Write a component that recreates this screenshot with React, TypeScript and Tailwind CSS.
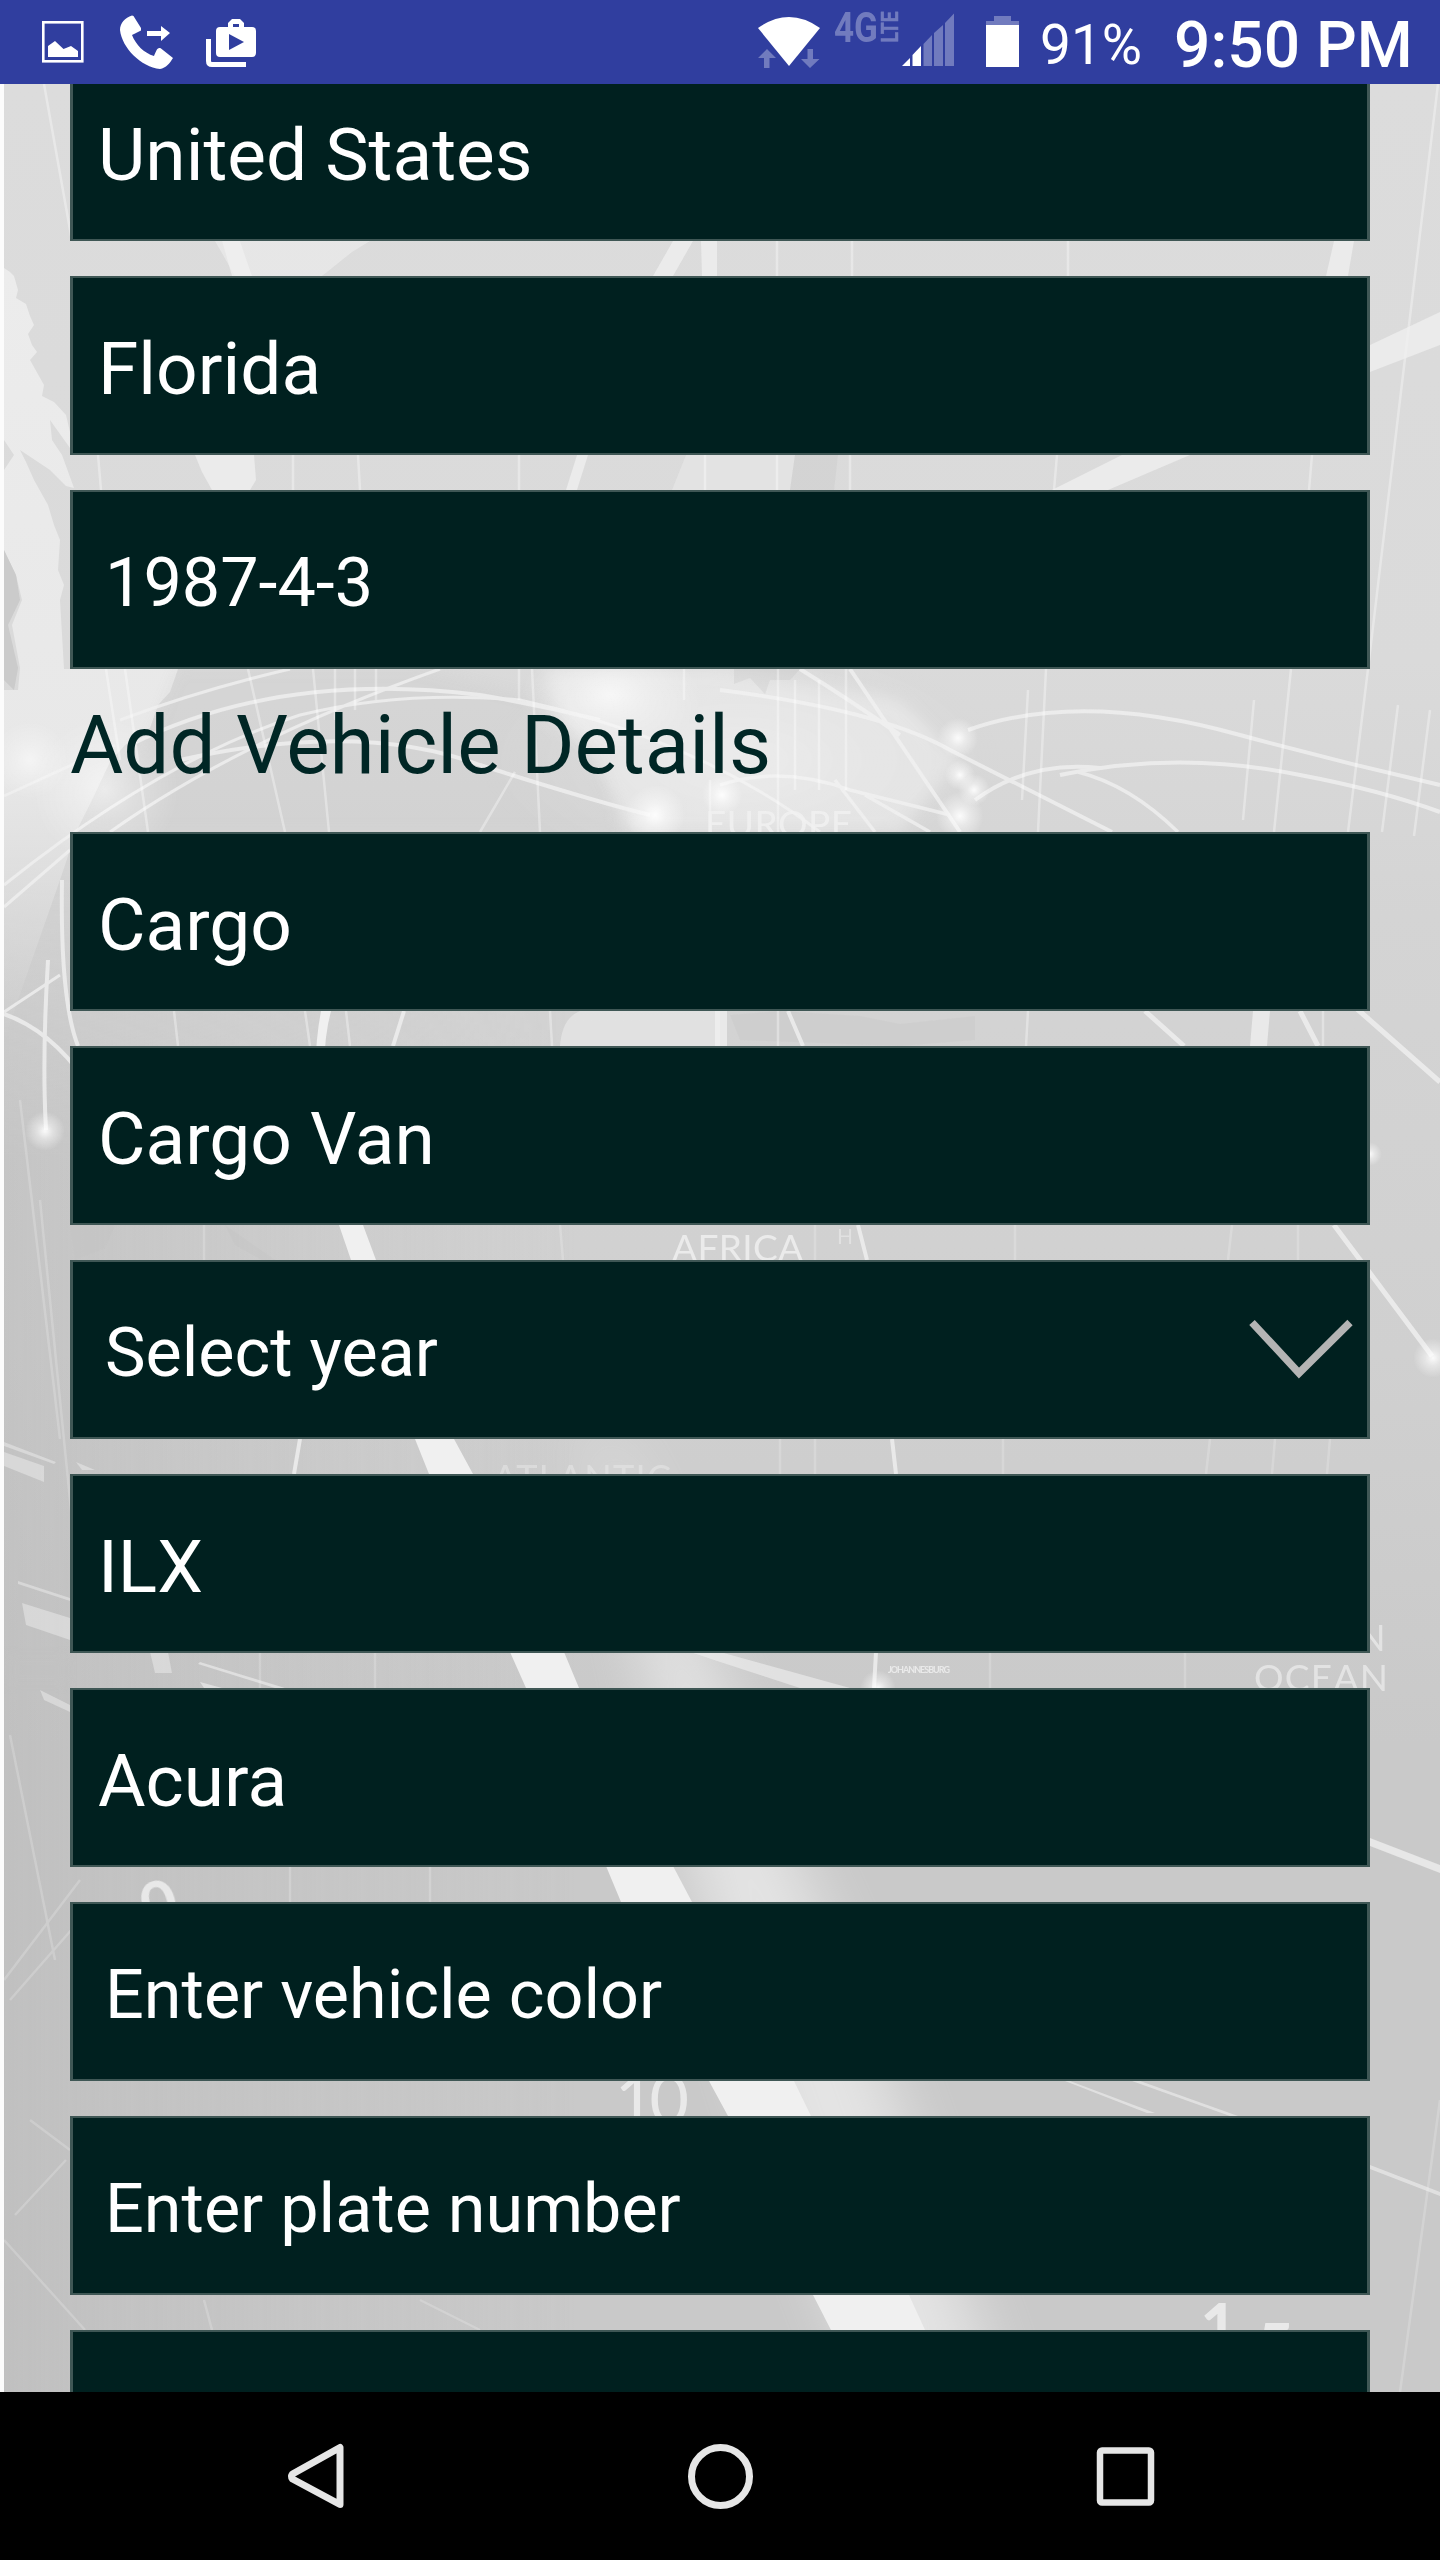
const fields: { label: string; kind: 'spinner' | 'input' | 'select' | 'empty' }[] = [
  { label: 'Cargo', kind: 'spinner' },
  { label: 'Cargo Van', kind: 'spinner' },
  { label: 'Select year', kind: 'select' },
  { label: 'ILX', kind: 'spinner' },
  { label: 'Acura', kind: 'spinner' },
  { label: 'Enter vehicle color', kind: 'input' },
  { label: 'Enter plate number', kind: 'input' },
  { label: '', kind: 'empty' },
];

function Field({ label, kind }: { label: string; kind: string }) {
  const spinner = kind === 'spinner';
  return (
    <div className="flex h-[179px] shrink-0 items-center justify-between border-x-[3px] border-y-2 border-[#3f5755] bg-[#00201f] pr-[14px] text-white">
      <span
        className={
          spinner
            ? 'pt-[7px] pl-[25px] text-[73px] leading-none whitespace-nowrap'
            : 'pt-[8px] pl-[32px] text-[68.3px] leading-none whitespace-nowrap'
        }
      >
        {label}
      </span>
      {kind === 'select' && (
        <svg className="h-[62px] w-[104px]" viewBox="0 0 104 62" fill="none">
          <path d="M3 3.500 L50 54 L101 3.500" stroke="#b4b4b4" strokeWidth="7.5" />
        </svg>
      )}
    </div>
  );
}

function StatusBar() {
  return (
    <header className="relative z-10 flex h-[84px] shrink-0 items-start bg-[#303e9f] text-white">
      <svg className="h-[84px] w-[1030px] shrink-0" viewBox="0 0 1030 84">
        <rect x="43.3" y="22.3" width="39" height="39" fill="none" stroke="#fff" strokeWidth="2.6" />
        <path fill="#fff" d="M48 57V46L55 41L63.500 49L71 46L78 51V57Z" />
        <path
          fill="#fff"
          d="M132 15.500 C125 18 120 23 120 30 C122 48 141 67 160 69 C166 68 170 63 173 58 L161 48.500 C157 46.500 156 52 154 56 C144 53 136 45 132 35 L141 30.500 L141 28 L133.500 16Z"
        />
        <path fill="#fff" d="M147 31H161V26L170 33L161 41V36H147Z" />
        <path
          fill="#fff"
          fillRule="evenodd"
          d="M228 27V23L232 19H240L244 23V27H252Q256 27 256 31V53Q256 57 252 57H220Q216 57 216 53V31Q216 27 220 27ZM233 24V27H239V24ZM229 34V50L244 42Z"
        />
        <path d="M208.500 39V61Q208.500 64.500 212 64.500H246" fill="none" stroke="#fff" strokeWidth="5" />
        <path fill="#fff" d="M789 66L758 28Q789 6 820 28Z" />
        <g fill="#717bbe">
          <path d="M767 49L776 58H769.500V68H764V58H758Z" />
          <path d="M810 68L819.500 59H813V49H807.500V59H801Z" />
        </g>
        <text x="834" y="42" fill="#717bbe" fontSize="42" fontWeight="700" fontFamily="Roboto" textLength="44" lengthAdjust="spacingAndGlyphs">
          4G
        </text>
        <text x="0" y="0" transform="translate(898 42.500) rotate(-90)" fill="#717bbe" stroke="#717bbe" strokeWidth="0.5" fontSize="24" fontWeight="700" fontFamily="Roboto" textLength="31" lengthAdjust="spacingAndGlyphs">
          LTE
        </text>
        <g fill="#fff">
          <path d="M902 66L910 58V66Z" />
          <path d="M912.500 66V55L921 46V66Z" />
        </g>
        <g fill="#717bbe">
          <path d="M923.500 66V44L932 35V66Z" />
          <path d="M934 66V33L943 25V66Z" />
          <path d="M945 66V23L954 13.500V66Z" />
          <path d="M986 25V21H994V16H1011V21H1019V25Z" />
        </g>
        <rect x="986" y="25" width="33" height="42" fill="#fff" />
      </svg>
      <span className="w-[107px] shrink-0 pt-[12px] pl-[10px] text-[55px] leading-[66px] whitespace-nowrap">91%</span>
      <span className="pt-[13px] pl-[37px] text-[64px] leading-[66px] font-medium whitespace-nowrap">9:50 PM</span>
    </header>
  );
}

/* Washed-out world map with flight arcs, drawn behind the form. */
function MapBackdrop() {
  return (
    <svg className="absolute inset-0 h-full w-full" viewBox="0 84 1440 2308" preserveAspectRatio="none">
      <defs>
        <linearGradient id="base" x1="0" y1="0" x2="0" y2="1">
          <stop offset="0" stopColor="#dcdcdc" />
          <stop offset="0.25" stopColor="#dadada" />
          <stop offset="0.36" stopColor="#d4d4d4" />
          <stop offset="0.55" stopColor="#d0d0d0" />
          <stop offset="0.72" stopColor="#c9c9c9" />
          <stop offset="1" stopColor="#c9c9c9" />
        </linearGradient>
        <radialGradient id="glow">
          <stop offset="0" stopColor="#fff" stopOpacity="0.9" />
          <stop offset="0.4" stopColor="#fff" stopOpacity="0.45" />
          <stop offset="1" stopColor="#fff" stopOpacity="0" />
        </radialGradient>
        <linearGradient id="shade" x1="0" y1="0" x2="1" y2="0">
          <stop offset="0" stopColor="#b8b8b8" stopOpacity="0.5" />
          <stop offset="0.4" stopColor="#c0c0c0" stopOpacity="0" />
        </linearGradient>
        <linearGradient id="shadeFade" x1="0" y1="0" x2="0" y2="1">
          <stop offset="0" stopColor="#000" />
          <stop offset="0.2" stopColor="#fff" />
        </linearGradient>
        <mask id="shadeMask">
          <rect y="850" width="1440" height="1542" fill="url(#shadeFade)" />
        </mask>
        <linearGradient id="coast" x1="0" y1="0" x2="0" y2="1">
          <stop offset="0" stopColor="#ececec" />
          <stop offset="0.65" stopColor="#e8e8e8" />
          <stop offset="1" stopColor="#e0e0e0" stopOpacity="0" />
        </linearGradient>
        <filter id="soft" x="-50%" y="-50%" width="200%" height="200%">
          <feGaussianBlur stdDeviation="30" />
        </filter>
        <filter id="edge" x="-10%" y="-10%" width="120%" height="120%">
          <feGaussianBlur stdDeviation="7" />
        </filter>
      </defs>
      <rect y="84" width="1440" height="2308" fill="url(#base)" />
      <rect y="850" width="1440" height="1542" fill="url(#shade)" mask="url(#shadeMask)" />

      <g fill="#ebebeb">
        <path
          fill="url(#coast)"
          d="M4 268L10 272L14 276L18 290L16 298L26 304L30 316L34 325L28 334L32 345L37 352L30 360L44 385L42 396L54 402L66 415L70 432V448L50 420L52 440L62 455L74 488L66 486L50 470L20 450L26 462L34 480L48 505L54 525L60 540L58 570L64 585L60 600L64 669H178L170 692L158 705L150 728L125 745L110 762L92 800L76 832L60 880L4 1040V690L18 690L20 668L12 625L22 600L16 575L4 550V470L14 455L4 440Z"
        />
        <path d="M158 241H370L352 252L322 276H235L215 241Z" opacity="0.7" />
        <path d="M195 455H254L256 480L250 490H212L202 472Z" />
        <path d="M686 455H795L790 490H672L680 470Z" opacity="0.5" />
        <path d="M545 669H720L900 700L960 760L900 832H625L610 790L590 755L560 720Z" opacity="0.6" filter="url(#edge)" />
        <path d="M580 1011H720V1046H560Q562 1018 580 1011Z" opacity="0.6" />
      </g>
      <g fill="#c4c4c4" opacity="0.7">
        <path d="M4 550L16 575L20 600L8 625L18 668L14 690L4 680Z" />
        <path d="M178 669H420L540 700L600 760L625 832H90L105 790L150 740Z" opacity="0.3" filter="url(#edge)" />
        <path d="M730 1015L780 1011L860 1016L900 1024L975 1016V1040L900 1046L740 1040Z" opacity="0.35" />
        <path d="M795 455H838L834 490H790Z" opacity="0.4" />
        <path d="M734 669H800L790 680H770L765 694L750 678L734 684Z" opacity="0.5" />
        <path d="M70 1225H115L105 1248L75 1260ZM225 1225L275 1260H262L235 1245Z" opacity="0.4" />
        <path d="M4 1650H70V1690H4Z" opacity="0.4" filter="url(#edge)" />
      </g>

      <path
        d="M590 1400L690 1860L760 2100L870 2392H1000L860 2000L700 1640Z"
        fill="#fff"
        opacity="0.5"
        filter="url(#soft)"
      />
      <path
        d="M331 1011Q318 1060 330 1130L363 1225L376 1260L454 1439L473 1474L564 1652L579 1688L673 1866L692 1902L794 2081L811 2116L909 2295L925 2330L960 2392H865L831 2330L813 2295L728 2116L709 2081L621 1902L606 1866L526 1688L510 1652L429 1474L415 1439L351 1260L339 1225Q304 1100 321 1011Z"
        fill="#f0f0f0"
      />

      <g fill="none" stroke="#f0f0f0" strokeWidth="4" opacity="0.8">
        <path d="M4 796L115 745M120 720Q200 690 290 669M4 1012L60 975M4 885Q160 760 300 715Q400 690 520 700Q700 740 820 832M4 907L70 850M110 832Q240 740 440 669" strokeWidth="3" />
        <path d="M130 745Q280 670 480 695Q540 705 600 720M180 760Q360 720 480 765Q590 800 650 815" />
        <path d="M720 690Q880 710 950 750L1112 832M850 669L960 832M800 669Q850 700 900 735" />
        <path d="M968 730Q1080 690 1240 735Q1340 762 1440 785M975 800Q1030 760 1100 768M1060 775Q1180 750 1300 775Q1380 790 1440 812" />
        <path d="M720 785Q780 765 850 790L950 815M1078 772Q1130 785 1178 832M835 780L875 832M865 795L930 832" strokeWidth="3.5" />
        <path d="M4 1014Q50 1030 85 1080M48 960Q42 1060 46 1130M62 880Q60 1000 78 1046" />
        <path d="M1356 1008L1440 1082M1334 1225L1432 1356M1145 1011L1184 1046M1300 1011L1318 1046" strokeWidth="5" />
        <path d="M404 1011L393 1046M300 1439L294 1474M788 1011L803 1046M858 1225L867 1260M892 1439L896 1474M876 1652L874 1688" />
      </g>
      <g stroke="#fff" strokeWidth="2.5" opacity="0.35" fill="none">
        <path d="M44 84L72 241M98 455L101 490M293 455V490M358 455L360 490M519 455V490M705 455V490M777 241V276M777 455V490M852 241V276M850 455V490M1068 241V276M1057 455L1054 490M1312 455L1309 490M1438 84L1400 400L1368 669L1348 832M1291 669L1274 832M1046 669L1038 832M1028 690L1022 800M1254 700L1243 820M1398 705L1382 832M1430 710L1414 836" />
        <path d="M106 669L120 760M125 669L148 832M248 669L285 832M313 669L329 832M335 669V720M355 669V710M376 669V700M519 669V700M532 669L540 832M684 669V700M778 669V832M795 680V790M819 680V790M846 669V790M515 772L480 832M710 780V832" />
        <path d="M174 1011L178 1046M305 1011L310 1046M346 1011L350 1046M550 1011L552 1046M778 1011V1046M1028 1011L1026 1046M1323 1011V1046" />
      </g>
      <g stroke="#fff" strokeWidth="2.5" opacity="0.2" fill="none">
        <path d="M204 1225V1260M560 1225L563 1260M815 1225V1260M1015 1225V1260M1232 1225L1228 1260M1298 1225V1260" />
        <path d="M20 1100L60 1439M40 1200L72 1520M780 1439V1474M815 1439V1474M1003 1439V1474M1210 1439L1206 1474M1275 1439L1272 1474M1330 1439L1327 1474M10 1735L55 1960M260 1652V1688M375 1652V1688M990 1652V1688M1185 1652V1688M290 1866V1902M430 1866V1902M204 2300L212 2330M420 2300L480 2330M1440 2100L1400 2392M4 1980L80 1880M10 2000L80 1920M15 2215L66 2160M30 2120L70 2150M4 2240L85 2330" />
      </g>
      <g fill="#f0f0f0" opacity="0.75">
        <path d="M1370 345L1440 312V345L1370 372Z" />
        <path d="M1334 241H1354L1348 276H1326Z" />
        <path d="M673 241H693L673 276H653ZM701 241H717V276H702Z" />
        <path d="M222 241H240L252 276H232Z" />
        <path d="M577 455H588L577 490H566Z" />
        <path d="M1122 455H1190L1108 490H1052Z" />
        <path d="M715 1011H727V1046H715ZM1253 1011H1270L1267 1046H1250Z" />
        <path d="M4 1452L44 1466V1482L4 1466ZM4 1442L56 1462L54 1464L4 1446ZM76 1462L95 1470H82Z" opacity="0.6" />
        <path d="M18 1581L70 1598V1601L18 1584ZM22 1603L70 1618V1640L26 1625ZM150 1652H168L172 1673H155ZM40 1690L70 1705V1712L44 1700Z" opacity="0.6" />
        <path d="M200 1662L285 1688H275L198 1664ZM200 1682L222 1688H204ZM690 1652H720L850 1688H800Z" opacity="0.8" />
        <path d="M1370 1838L1440 1865V1873L1370 1846Z" />
        <path d="M1070 2081L1155 2113H1147L1065 2081ZM1140 2081L1238 2116H1230L1132 2081ZM1370 2165L1440 2192V2196L1370 2169Z" opacity="0.8" />
      </g>
      <g fill="url(#glow)">
        <circle cx="105" cy="790" r="75" opacity="0.6" />
        <ellipse cx="610" cy="695" rx="90" ry="60" opacity="0.75" />
        <ellipse cx="740" cy="760" rx="260" ry="120" opacity="0.35" />
        <circle cx="655" cy="815" r="30" />
        <circle cx="958" cy="738" r="20" />
        <circle cx="960" cy="775" r="15" />
        <circle cx="974" cy="790" r="16" />
        <circle cx="960" cy="816" r="24" />
        <circle cx="722" cy="795" r="20" />
        <circle cx="45" cy="1131" r="20" />
        <circle cx="1433" cy="1358" r="20" />
        <circle cx="1370" cy="1154" r="12" />
        <circle cx="878" cy="1688" r="18" />
        <circle cx="30" cy="760" r="40" opacity="0.6" />
      </g>
      <g fill="#f2f2f2" fontFamily="Lato" opacity="0.8">
        <text x="705" y="837" fontSize="37" textLength="147">EUROPE</text>
        <text x="672" y="1261" fontSize="37" textLength="131">AFRICA</text>
        <text x="837" y="1244" fontSize="21" opacity="0.6">H</text>
        <text x="493" y="1491" fontSize="36" textLength="178" opacity="0.5">ATLANTIC</text>
        <text x="1358" y="1651" fontSize="36" opacity="0.8">N</text>
        <text x="1254" y="1691" fontSize="37" textLength="134" opacity="0.8">OCEAN</text>
        <text x="888" y="1673" fontSize="9" fontWeight="700" textLength="62">JOHANNESBURG</text>
        <text x="140" y="1924" fontSize="62" fontWeight="700" transform="rotate(-16 160 1900)">0</text>
        <text x="615" y="2124" fontSize="68" textLength="74">10</text>
        <text x="1200" y="2352" fontSize="66" fontWeight="700">1</text>
        <text x="1256" y="2372" fontSize="66" fontWeight="700">5</text>
      </g>
      <rect y="84" width="4" height="2308" fill="#fcfcfc" />
    </svg>
  );
}

function NavBar() {
  return (
    <nav className="relative z-10 flex h-[168px] shrink-0 items-center justify-between bg-black pr-[282px] pl-[284px]">
      <svg className="h-[68px] w-[64px]" viewBox="0 0 64 68" fill="none">
        <path d="M56 5.500V62.500L8.500 37Q6.500 34.500 8.500 32Z" stroke="#e6e6e6" strokeWidth="7" strokeLinejoin="round" />
      </svg>
      <svg className="h-[68px] w-[68px]" viewBox="0 0 68 68" fill="none">
        <circle cx="33.5" cy="34.500" r="29" stroke="#e6e6e6" strokeWidth="7" />
      </svg>
      <svg className="h-[68px] w-[64px]" viewBox="0 0 64 68" fill="none">
        <rect x="6" y="8.500" width="51" height="52" rx="2" stroke="#e6e6e6" strokeWidth="6.500" />
      </svg>
    </nav>
  );
}

export default function App() {
  return (
    <div className="flex h-[2560px] w-[1440px] flex-col overflow-hidden font-[Roboto,sans-serif]">
      <StatusBar />
      <main className="relative min-h-0 flex-1 overflow-hidden">
        <MapBackdrop />
        <div className="relative -mt-[22px] flex flex-col px-[70px]">
          <div className="flex flex-col gap-[35px]">
            <Field label="United States" kind="spinner" />
            <Field label="Florida" kind="spinner" />
            <Field label="1987-4-3" kind="input" />
          </div>
          <h2 className="flex h-[163px] items-center pb-[9px] text-[81.8px] leading-none whitespace-nowrap text-[#002625]">
            Add Vehicle Details
          </h2>
          <div className="flex flex-col gap-[35px]">
            {fields.map((f, i) => (
              <Field key={i} label={f.label} kind={f.kind} />
            ))}
          </div>
        </div>
      </main>
      <NavBar />
    </div>
  );
}
